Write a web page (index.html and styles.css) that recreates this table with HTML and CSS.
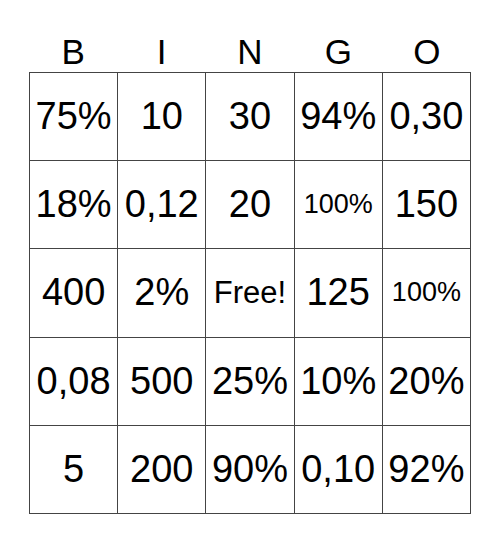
FILE: index.html
```html
<!DOCTYPE html>
<html>
<head>
<meta charset="utf-8">
<link rel="stylesheet" href="styles.css">
</head>
<body>
<div class="card">
  <div class="head">
    <span>B</span><span>I</span><span>N</span><span>G</span><span>O</span>
  </div>
  <div class="grid">
    <div class="cell">75%</div><div class="cell">10</div><div class="cell">30</div><div class="cell">94%</div><div class="cell">0,30</div>
    <div class="cell">18%</div><div class="cell">0,12</div><div class="cell">20</div><div class="cell small">100%</div><div class="cell">150</div>
    <div class="cell">400</div><div class="cell">2%</div><div class="cell free">Free!</div><div class="cell">125</div><div class="cell small">100%</div>
    <div class="cell">0,08</div><div class="cell">500</div><div class="cell">25%</div><div class="cell">10%</div><div class="cell">20%</div>
    <div class="cell">5</div><div class="cell">200</div><div class="cell">90%</div><div class="cell">0,10</div><div class="cell">92%</div>
  </div>
</div>
</body>
</html>
```

FILE: styles.css
```css
html, body {
  margin: 0;
  padding: 0;
  background: #fff;
}
body {
  font-family: "Liberation Sans", Arial, sans-serif;
  color: #000;
}
.card {
  width: 442px;
  margin: 0 auto;
  padding-top: 30px;
}
.head {
  display: grid;
  grid-template-columns: repeat(5, 1fr);
  height: 42px;
  align-items: center;
  font-size: 35px;
  text-align: center;
  line-height: 1;
}
.grid {
  display: grid;
  grid-template-columns: repeat(5, 1fr);
  grid-template-rows: repeat(5, 1fr);
  border-top: 1px solid #444;
  border-left: 1px solid #444;
  width: 441px;
  height: 441px;
}
.cell {
  border-right: 1px solid #444;
  border-bottom: 1px solid #444;
  display: flex;
  align-items: center;
  justify-content: center;
  font-size: 38px;
}
.cell.small {
  font-size: 27px;
}
.cell.free {
  font-size: 31px;
}
```
